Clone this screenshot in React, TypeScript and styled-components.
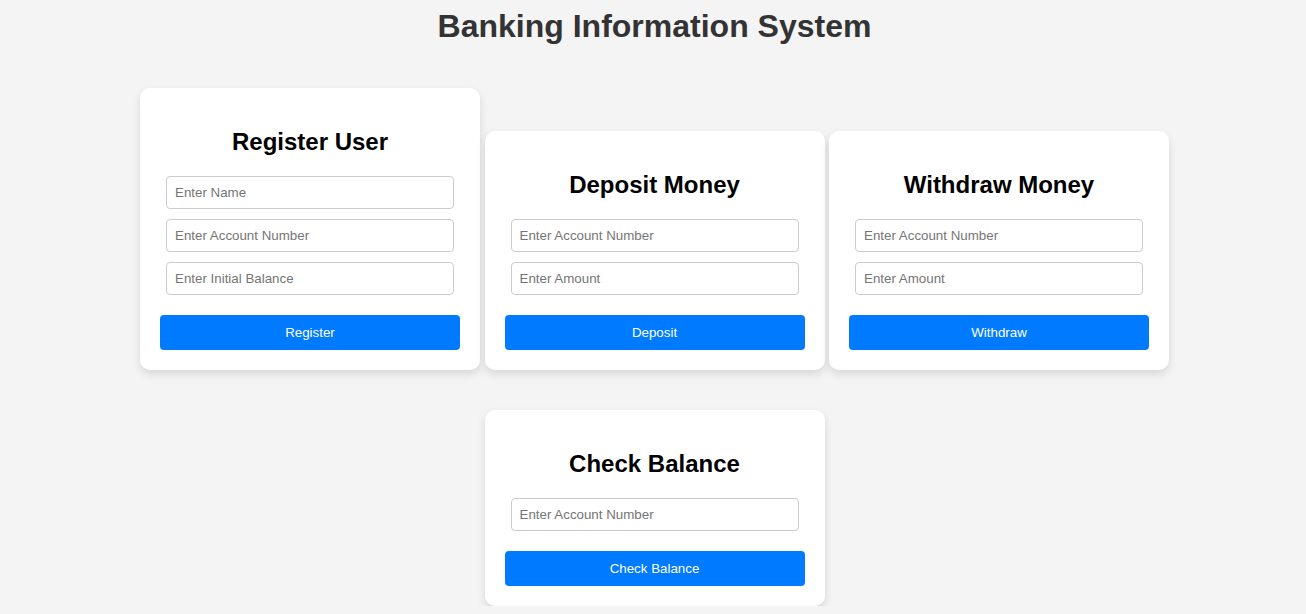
import React from "react";
import styled, { createGlobalStyle } from "styled-components";

const GlobalStyle = createGlobalStyle`
  html, body {
    margin: 0;
    padding: 0;
    background: #f4f4f4;
    font-family: "Liberation Sans", Arial, sans-serif;
  }
`;

const Page = styled.div`
  padding: 8px 0 0 3px;
  display: flex;
  flex-direction: column;
  align-items: center;
`;

const Title = styled.h1`
  margin: 0 0 43px;
  font-size: 32px;
  font-weight: bold;
  color: #333;
  text-align: center;
`;

const Grid = styled.div`
  display: flex;
  flex-direction: column;
  align-items: center;
  row-gap: 40px;
`;

const Row = styled.div`
  display: flex;
  align-items: flex-end;
  justify-content: center;
  column-gap: 4.5px;
`;

const Card = styled.section`
  width: 300px;
  padding: 20px;
  background: #fff;
  border-radius: 10px;
  box-shadow: 0 4px 8px rgba(0, 0, 0, 0.12);
  display: flex;
  flex-direction: column;
  align-items: center;
`;

const CardTitle = styled.h2`
  margin: 20px 0;
  font-size: 24px;
  font-weight: bold;
  color: #000;
  text-align: center;
`;

const Fields = styled.div`
  display: flex;
  flex-direction: column;
  align-items: center;
  gap: 10px;
  width: 100%;
`;

const Input = styled.input`
  box-sizing: content-box;
  width: 90%;
  padding: 8px;
  border: 1px solid #ccc;
  border-radius: 4px;
  font-family: "Liberation Sans", Arial, sans-serif;
  font-size: 13.333px;
  color: #000;
  background: #fff;
  outline: none;
  &::placeholder {
    color: #757575;
  }
`;

const Button = styled.button`
  margin-top: 20px;
  width: 100%;
  padding: 10px;
  border: none;
  border-radius: 4px;
  background: #007bff;
  color: #fff;
  font-family: "Liberation Sans", Arial, sans-serif;
  font-size: 13.333px;
  cursor: pointer;
`;

type FormCardProps = {
  title: string;
  placeholders: string[];
  action: string;
};

const FormCard = ({ title, placeholders, action }: FormCardProps) => (
  <Card>
    <CardTitle>{title}</CardTitle>
    <Fields>
      {placeholders.map((p) => (
        <Input key={p} type="text" placeholder={p} />
      ))}
    </Fields>
    <Button type="button">{action}</Button>
  </Card>
);

export default function App() {
  return (
    <>
      <GlobalStyle />
      <Page>
        <Title>Banking Information System</Title>
        <Grid>
          <Row>
            <FormCard
              title="Register User"
              placeholders={["Enter Name", "Enter Account Number", "Enter Initial Balance"]}
              action="Register"
            />
            <FormCard
              title="Deposit Money"
              placeholders={["Enter Account Number", "Enter Amount"]}
              action="Deposit"
            />
            <FormCard
              title="Withdraw Money"
              placeholders={["Enter Account Number", "Enter Amount"]}
              action="Withdraw"
            />
          </Row>
          <Row>
            <FormCard
              title="Check Balance"
              placeholders={["Enter Account Number"]}
              action="Check Balance"
            />
          </Row>
        </Grid>
      </Page>
    </>
  );
}
